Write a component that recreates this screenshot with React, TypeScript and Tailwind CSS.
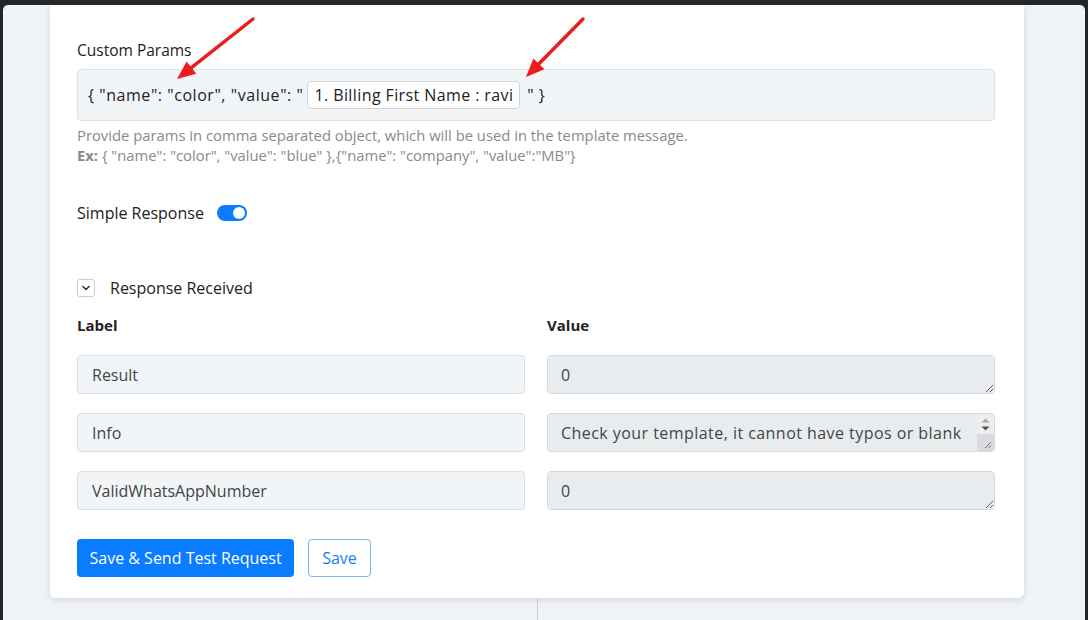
import { useState } from "react";

const responseRows = [
  { label: "Result", value: "0" },
  {
    label: "Info",
    value:
      "Check your template, it cannot have typos or blank spaces before or after the variables",
  },
  { label: "ValidWhatsAppNumber", value: "0" },
];

function Toggle({ on, onChange }: { on: boolean; onChange: () => void }) {
  return (
    <button
      type="button"
      onClick={onChange}
      className={`relative h-4 w-[30px] rounded-full ${on ? "bg-[#0a7cff]" : "bg-gray-300"}`}
    >
      <span
        className={`absolute top-[2px] h-3 w-3 rounded-full bg-white ${on ? "left-[16px]" : "left-[2px]"}`}
      />
    </button>
  );
}

function Arrow({ x1, y1, x2, y2 }: { x1: number; y1: number; x2: number; y2: number }) {
  const angle = Math.atan2(y2 - y1, x2 - x1);
  const len = 20;
  const spread = 0.4;
  const ax = x2 - len * Math.cos(angle - spread);
  const ay = y2 - len * Math.sin(angle - spread);
  const bx = x2 - len * Math.cos(angle + spread);
  const by = y2 - len * Math.sin(angle + spread);
  const sx = x2 - (len - 4) * Math.cos(angle);
  const sy = y2 - (len - 4) * Math.sin(angle);
  return (
    <g>
      <line x1={x1} y1={y1} x2={sx} y2={sy} stroke="#ec1c1c" strokeWidth="3.5" strokeLinecap="round" />
      <polygon points={`${x2},${y2} ${ax},${ay} ${bx},${by}`} fill="#ec1c1c" />
    </g>
  );
}

// scrollbar strip for the value box whose text runs past one line
function ScrollStrip() {
  return (
    <div className="pointer-events-none absolute bottom-0 right-0 top-0 flex w-[17px] flex-col rounded-r-[3px] bg-[#eceef0]">
      <div className="flex h-[20px] flex-col items-center justify-center gap-[3px]">
        <svg width="9" height="5" viewBox="0 0 9 5">
          <path d="M0.5 4.5 4.5 0.5 8.5 4.5Z" fill="#a5a7aa" />
        </svg>
        <svg width="9" height="5" viewBox="0 0 9 5">
          <path d="M0.5 0.5 4.5 4.5 8.5 0.5Z" fill="#505256" />
        </svg>
      </div>
      <div className="relative flex-1 rounded-br-[3px] bg-[#d9dbde]">
        <svg className="absolute bottom-[2px] right-[2px]" width="9" height="9" viewBox="0 0 9 9">
          <path d="M8 2 2 8M8 5.5 5.5 8" stroke="#6b6d70" strokeWidth="1" />
        </svg>
      </div>
    </div>
  );
}

export default function App() {
  const [simple, setSimple] = useState(true);
  const [open, setOpen] = useState(true);

  return (
    <div className="relative flex h-[620px] w-[1088px] flex-col bg-[#252627] px-[3px] pt-[5px] font-['Open_Sans',sans-serif]">
      <div className="flex flex-1 flex-col overflow-hidden rounded-t-[5px] bg-[#eff3f7]">
        <div className="ml-[47px] flex h-[593px] w-[974px] flex-col rounded-b-md bg-white pl-[27px] pr-[29px] pt-[35px] shadow-[0_2px_6px_rgba(0,0,0,0.12)]">
          <div className="text-[15.5px] leading-5 text-[#222]">Custom Params</div>

          <div className="mt-[9px] flex h-[52px] items-center rounded border border-[#dde2e8] bg-[#f2f5f8] px-[10px] text-[16px] tracking-[0.4px] text-[#222]">
            <span className="whitespace-pre tracking-[0.55px]">{'{ "name": "color", "value": "'}</span>
            <span className="ml-[4px] flex h-[28px] items-center rounded border border-[#cfd4da] bg-white px-[6px]">
              1. Billing First Name : ravi
            </span>
            <span className="ml-[7px] whitespace-pre">{'" }'}</span>
          </div>

          <p className="mt-[4px] text-[14.8px] leading-5 text-[#8a8a8a]">
            Provide params in comma separated object, which will be used in the template message.
            <br />
            <b className="font-bold">Ex:</b>
            {' { "name": "color", "value": "blue" },{"name": "company", "value":"MB"}'}
          </p>

          <div className="mt-[38px] flex items-center gap-[13px]">
            <span className="text-[16px] leading-5 text-[#222]">Simple Response</span>
            <Toggle on={simple} onChange={() => setSimple(!simple)} />
          </div>

          <div className="mt-[55px] flex items-center gap-[15px]">
            <button
              type="button"
              onClick={() => setOpen(!open)}
              className="flex h-[18px] w-[18px] items-center justify-center rounded-[3px] border border-[#c9ced4] bg-white"
            >
              <svg width="10" height="10" viewBox="0 0 10 10" fill="none">
                <path d="M2 3.5 5 6.5 8 3.5" stroke="#333" strokeWidth="1.6" strokeLinecap="round" strokeLinejoin="round" />
              </svg>
            </button>
            <span className="text-[16px] leading-5 text-[#222]">Response Received</span>
          </div>

          {open && (
            <div className="mt-[17px]">
              <div className="grid grid-cols-2 gap-x-[22px]">
                <div className="text-[15px] font-bold leading-5 text-[#222]">Label</div>
                <div className="text-[15px] font-bold leading-5 text-[#222]">Value</div>
              </div>
              <div className="mt-[20px] flex flex-col gap-[19px]">
                {responseRows.map((row) => {
                  const long = row.value.length > 40;
                  return (
                    <div key={row.label} className="grid grid-cols-2 gap-x-[22px]">
                      <input
                        readOnly
                        value={row.label}
                        className="h-[39px] rounded border border-[#d9dee4] bg-[#f2f5f8] px-[14px] text-[16px] text-[#444] outline-none"
                      />
                      {long ? (
                        <div className="relative h-[39px] rounded border border-[#d3d8de] bg-[#e9ecef]">
                          <textarea
                            readOnly
                            rows={1}
                            value={row.value}
                            className="mt-[7px] block h-[24px] w-full resize-none overflow-hidden bg-transparent pl-[13px] pr-[28px] text-[16px] leading-6 tracking-[0.45px] text-[#444] outline-none"
                          />
                          <ScrollStrip />
                        </div>
                      ) : (
                        <textarea
                          readOnly
                          rows={1}
                          value={row.value}
                          className="block h-[39px] w-full rounded border border-[#d3d8de] bg-[#e9ecef] px-[13px] py-[7px] text-[16px] leading-6 text-[#444] outline-none"
                        />
                      )}
                    </div>
                  );
                })}
              </div>
            </div>
          )}

          <div className="mt-[29px] flex items-center gap-[14px]">
            <button
              type="button"
              className="h-[38px] rounded bg-[#0a7cff] px-[12.5px] text-[16px] text-white"
            >
              Save &amp; Send Test Request
            </button>
            <button
              type="button"
              className="h-[38px] rounded border border-[#7fb4f6] bg-white px-[13px] text-[16px] text-[#1a7cf0]"
            >
              Save
            </button>
          </div>
        </div>
        <div className="ml-[534px] flex-1 border-l border-[#c7cbd0]" />
      </div>

      <svg className="pointer-events-none absolute left-0 top-0" width="1088" height="620">
        <Arrow x1={253} y1={19} x2={177} y2={79} />
        <Arrow x1={583} y1={19} x2={526} y2={77} />
      </svg>
    </div>
  );
}
